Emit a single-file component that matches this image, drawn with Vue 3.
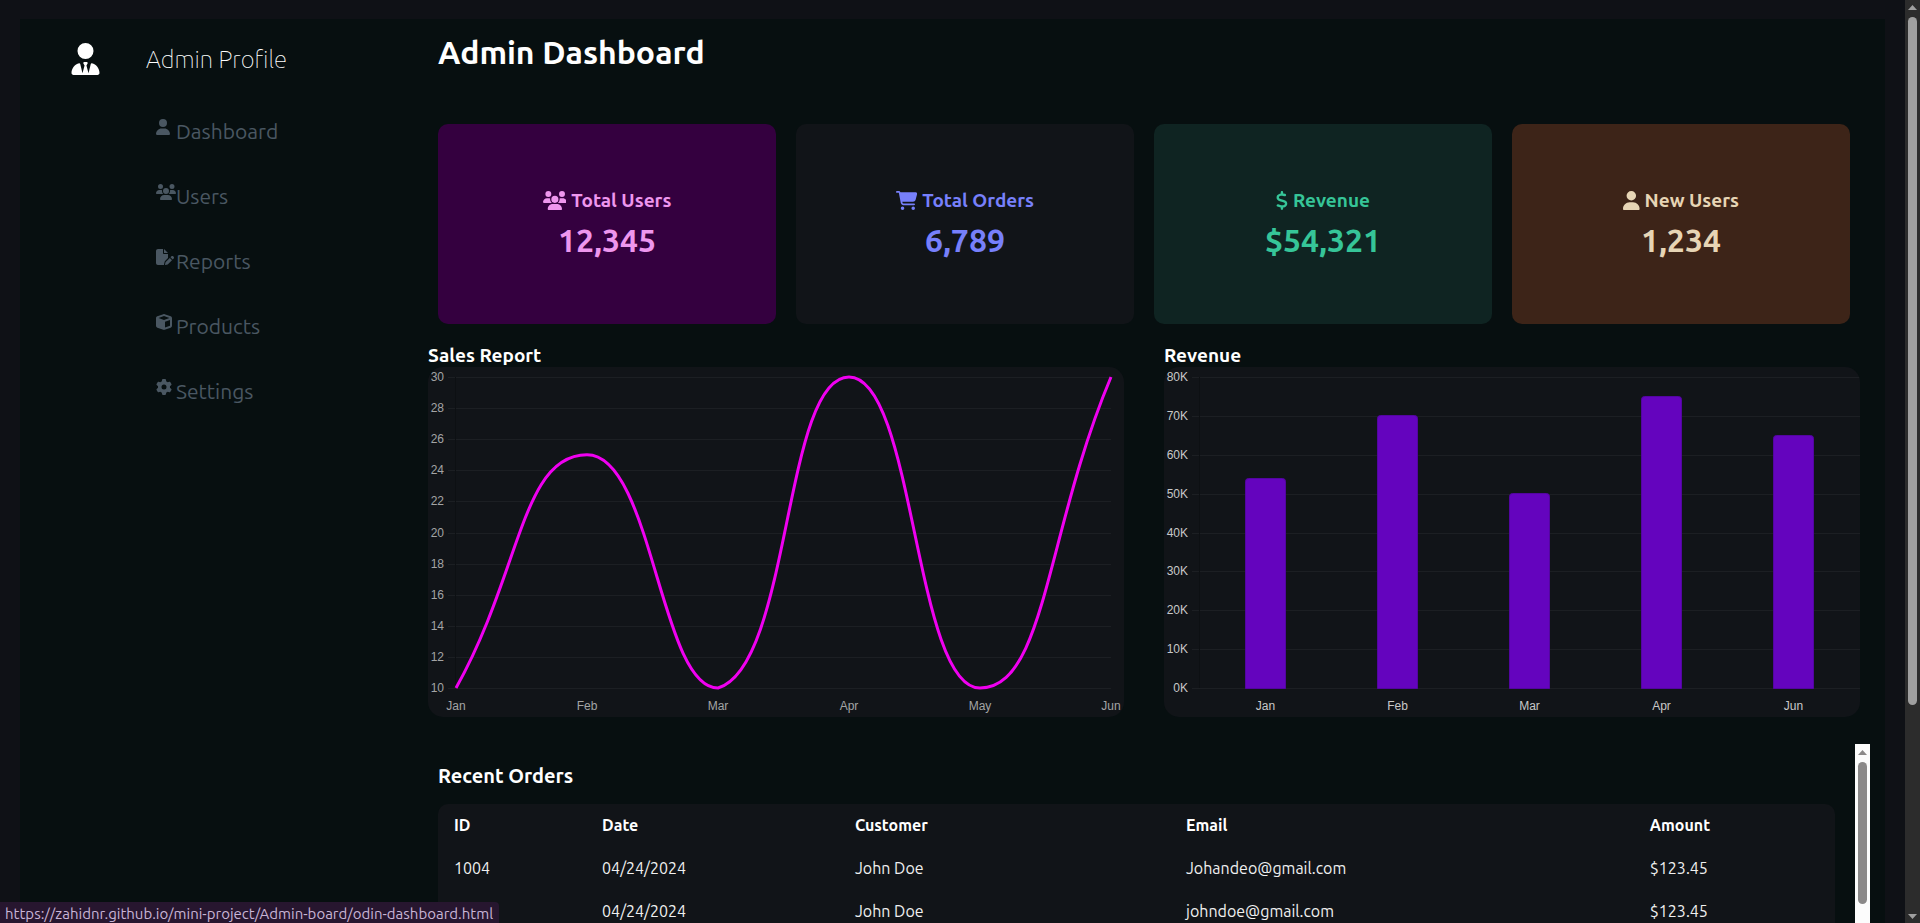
<script setup>
const icons = {
  user: { w: 448, d: 'M224 256A128 128 0 1 0 224 0a128 128 0 1 0 0 256zm-45.700 48C79.800 304 0 383.800 0 482.300C0 498.700 13.300 512 29.700 512H418.300c16.400 0 29.700-13.300 29.700-29.700C448 383.800 368.200 304 269.700 304H178.300z' },
  users: { w: 640, d: 'M144 0a80 80 0 1 1 0 160A80 80 0 1 1 144 0zM512 0a80 80 0 1 1 0 160A80 80 0 1 1 512 0zM0 298.700C0 239.800 47.800 192 106.700 192h42.700c15.900 0 31 3.500 44.600 9.700c-1.300 7.200-1.900 14.700-1.900 22.300c0 38.200 16.800 72.500 43.300 96c-.2 0-.4 0-.7 0H21.300C9.600 320 0 310.400 0 298.700zM405.300 320c-.2 0-.4 0-.7 0c26.600-23.500 43.300-57.800 43.300-96c0-7.600-.7-15-1.900-22.300c13.600-6.300 28.700-9.700 44.600-9.700h42.700C592.200 192 640 239.800 640 298.700c0 11.800-9.600 21.300-21.300 21.300H405.300zM224 224a96 96 0 1 1 192 0 96 96 0 1 1-192 0zM128 485.300C128 411.700 187.700 352 261.300 352H378.700C452.300 352 512 411.700 512 485.300c0 14.700-11.900 26.700-26.700 26.700H154.700c-14.700 0-26.700-11.900-26.700-26.700z' },
  report: { w: 576, d: 'M0 64C0 28.700 28.700 0 64 0H224V128c0 17.700 14.300 32 32 32H384V285.700l-86.800 86.800c-10.300 10.300-17.500 23.100-21 37.200l-18.700 74.900c-2.300 9.200-1.800 18.800 1.300 27.500H64c-35.300 0-64-28.700-64-64V64zm384 64H256V0L384 128zM549.800 235.700l14.400 14.400c15.600 15.600 15.600 40.900 0 56.600l-29.400 29.400-71-71 29.400-29.400c15.600-15.600 40.900-15.600 56.600 0zM311.900 417L441.100 287.800l71 71L382.900 487.900c-4.100 4.100-9.200 7-14.900 8.400l-60.100 15c-5.500 1.400-11.200-.2-15.200-4.200s-5.600-9.700-4.200-15.200l15-60.100c1.400-5.600 4.300-10.800 8.400-14.900z' },
  box: { w: 512, d: 'M234.500 5.700c13.900-5 29.100-5 43.100 0l192 68.600C495 83.400 512 107.500 512 134.600V377.400c0 27-17 51.200-42.500 60.300l-192 68.600c-13.900 5-29.100 5-43.100 0l-192-68.600C17 428.600 0 404.500 0 377.400V134.600c0-27 17-51.200 42.500-60.300l192-68.600zM256 66L82.300 128 256 190l173.700-62L256 66zm32 368.600l160-57.100v-188L288 246.600v188z' },
  gear: { w: 512, d: 'M495.900 166.600c3.200 8.700 .5 18.400-6.400 24.600l-43.300 39.400c1.100 8.300 1.700 16.800 1.700 25.400s-.6 17.100-1.700 25.400l43.300 39.400c6.900 6.200 9.600 15.900 6.400 24.600c-4.400 11.900-9.700 23.300-15.800 34.300l-4.700 8.100c-6.600 11-14 21.400-22.100 31.200c-5.900 7.200-15.700 9.600-24.500 6.800l-55.700-17.700c-13.400 10.300-28.200 18.900-44 25.400l-12.500 57.100c-2 9.100-9 16.300-18.200 17.800c-13.800 2.300-28 3.500-42.500 3.500s-28.700-1.200-42.500-3.500c-9.200-1.500-16.200-8.700-18.200-17.800l-12.500-57.100c-15.800-6.500-30.600-15.100-44-25.400L83.100 425.900c-8.800 2.800-18.600 .3-24.500-6.800c-8.100-9.800-15.500-20.200-22.100-31.200l-4.700-8.100c-6.100-11-11.400-22.400-15.800-34.300c-3.200-8.700-.5-18.400 6.400-24.600l43.300-39.400C64.600 273.100 64 264.600 64 256s.6-17.100 1.700-25.400L22.400 191.200c-6.900-6.200-9.600-15.900-6.400-24.600c4.400-11.900 9.700-23.300 15.800-34.300l4.700-8.100c6.600-11 14-21.400 22.100-31.200c5.900-7.200 15.700-9.600 24.500-6.800l55.700 17.700c13.400-10.300 28.200-18.900 44-25.400l12.500-57.100c2-9.100 9-16.300 18.200-17.800C227.300 1.200 241.500 0 256 0s28.700 1.200 42.500 3.500c9.200 1.500 16.200 8.700 18.200 17.800l12.500 57.100c15.800 6.500 30.600 15.100 44 25.400l55.700-17.700c8.800-2.800 18.600-.3 24.500 6.800c8.100 9.800 15.500 20.200 22.100 31.200l4.700 8.100c6.100 11 11.400 22.400 15.800 34.300zM256 336a80 80 0 1 0 0-160 80 80 0 1 0 0 160z' },
  cart: { w: 576, d: 'M0 24C0 10.700 10.700 0 24 0H69.500c22 0 41.500 12.800 50.600 32h411c26.300 0 45.500 25 38.600 50.400l-41 152.300c-8.500 31.400-37 53.300-69.500 53.300H170.700l5.400 28.500c2.200 11.300 12.100 19.500 23.600 19.500H488c13.300 0 24 10.700 24 24s-10.700 24-24 24H199.700c-34.600 0-64.300-24.600-70.700-58.500L77.400 54.500c-.7-3.800-4-6.500-7.900-6.500H24C10.700 48 0 37.300 0 24zM128 464a48 48 0 1 1 96 0 48 48 0 1 1-96 0zm336-48a48 48 0 1 1 0 96 48 48 0 1 1 0-96z' },
  dollar: { w: 320, d: 'M160 0c17.700 0 32 14.300 32 32V67.700c1.600 .2 3.100 .4 4.700 .7c.4 .1 .7 .1 1.100 .2l48 8.800c17.400 3.200 28.900 19.900 25.700 37.200s-19.900 28.900-37.200 25.700l-47.500-8.700c-31.300-4.600-58.900-1.500-78.300 6.200s-27.200 18.300-29 28.100c-2 10.700-.5 16.700 1.200 20.400c1.800 3.900 5.500 8.300 12.800 13.200c16.300 10.700 41.300 17.700 73.700 26.300l2.900 .8c28.600 7.600 63.600 16.800 89.600 33.800c14.200 9.300 27.600 21.900 35.900 39.500c8.500 17.900 10.300 37.900 6.400 59.200c-6.900 38-33.100 63.400-65.600 76.700c-13.700 5.600-28.600 9.200-44.400 11V480c0 17.700-14.300 32-32 32s-32-14.300-32-32V445.100c-.4-.1-.9-.1-1.300-.2l-.2 0c-24.400-3.800-64.500-14.300-91.500-26.300c-16.100-7.200-23.400-26.100-16.200-42.200s26.100-23.400 42.200-16.200c20.900 9.300 55.300 18.500 75.200 21.600c31.900 4.700 58.200 2 76-5.300c16.900-6.900 24.600-16.900 26.800-28.900c1.900-10.600 .4-16.700-1.300-20.400c-1.900-4-5.600-8.400-13-13.300c-16.400-10.700-41.500-17.700-74-26.300l-2.800-.7c-28.500-7.600-63.500-16.900-89.500-33.900c-14.200-9.300-27.500-22-35.800-39.600c-8.400-17.900-10.100-37.900-6.100-59.200C23.700 116 52.300 91.200 84.800 78.300c13.300-5.300 27.900-8.900 43.200-11V32c0-17.700 14.300-32 32-32z' },
  admin: { w: 448, d: 'M96 128a128 128 0 1 0 256 0A128 128 0 1 0 96 128zm94.500 200.200l18.600 31L175.800 483.100l-36-146.900c-2-8.100-9.800-13.400-17.900-11.300C51.900 342.400 0 405.800 0 481.300c0 17 13.800 30.700 30.700 30.700H417.300c17 0 30.700-13.800 30.700-30.700c0-75.500-51.900-138.900-121.900-156.400c-8.100-2-15.900 3.300-17.900 11.300l-36 146.900L238.900 359.200l18.600-31c6.400-10.700-1.300-24.200-13.700-24.200H204.300c-12.400 0-20.100 13.600-13.700 24.200z' },
}

const nav = [
  { label: 'Dashboard', icon: icons.user },
  { label: 'Users', icon: icons.users },
  { label: 'Reports', icon: icons.report },
  { label: 'Products', icon: icons.box },
  { label: 'Settings', icon: icons.gear },
]

const cards = [
  { label: 'Total Users', value: '12,345', icon: icons.users, tone: 'violet' },
  { label: 'Total Orders', value: '6,789', icon: icons.cart, tone: 'indigo' },
  { label: 'Revenue', value: '$54,321', icon: icons.dollar, tone: 'green' },
  { label: 'New Users', value: '1,234', icon: icons.user, tone: 'sand' },
]

const orders = [
  { id: '1004', date: '04/24/2024', customer: 'John Doe', email: 'Johandeo@gmail.com', amount: '$123.45' },
  { id: '', date: '04/24/2024', customer: 'John Doe', email: 'johndoe@gmail.com', amount: '$123.45' },
]

const TOP = 10
const BOTTOM = 321

// Line chart
const line = { left: 28, right: 683 }
const tension = 0.5
const months = ['Jan', 'Feb', 'Mar', 'Apr', 'May', 'Jun']
const sales = [10, 25, 10, 30, 10, 30]
const salesY = (v) => BOTTOM - ((v - 10) / 20) * (BOTTOM - TOP)
const points = sales.map((v, i) => ({
  x: line.left + ((line.right - line.left) * i) / (sales.length - 1),
  y: salesY(v),
}))
const salesTicks = Array.from({ length: 11 }, (_, i) => 30 - i * 2)

const clampY = (y) => Math.min(BOTTOM, Math.max(TOP, y))
const controls = points.map((p, i) => {
  const prev = points[Math.max(i - 1, 0)]
  const next = points[Math.min(i + 1, points.length - 1)]
  const before = Math.hypot(p.x - prev.x, p.y - prev.y)
  const after = Math.hypot(next.x - p.x, next.y - p.y)
  const a = (tension * before) / (before + after)
  const b = (tension * after) / (before + after)
  return {
    inX: p.x - a * (next.x - prev.x),
    inY: clampY(p.y - a * (next.y - prev.y)),
    outX: p.x + b * (next.x - prev.x),
    outY: clampY(p.y + b * (next.y - prev.y)),
  }
})
const curve = points
  .map((p, i) => {
    if (i === 0) return `M${p.x} ${p.y}`
    const from = controls[i - 1]
    const to = controls[i]
    return `C${from.outX} ${from.outY} ${to.inX} ${to.inY} ${p.x} ${p.y}`
  })
  .join('')

// Bar chart
const revenue = [
  { month: 'Jan', value: 54 },
  { month: 'Feb', value: 70 },
  { month: 'Mar', value: 50 },
  { month: 'Apr', value: 75 },
  { month: 'Jun', value: 65 },
]
const revenueY = (v) => BOTTOM - (v / 80) * (BOTTOM - TOP)
const barX = (i) => 35.5 + 132 * i + 66
const barPath = (i, v) => {
  const l = barX(i) - 20
  const r = barX(i) + 20
  const t = Math.floor(revenueY(v)) + 0.5
  return `M${l} ${BOTTOM + 0.5}V${t + 3}q0-3 3-3H${r - 3}q3 0 3 3V${BOTTOM + 0.5}z`
}
const revenueTicks = [80, 70, 60, 50, 40, 30, 20, 10, 0]
const gridY = (y) => Math.round(y) + 0.5
</script>

<template>
  <div class="window">
    <div class="page">
      <div class="shell">
        <aside class="sidebar">
          <div class="profile">
            <svg class="avatar" viewBox="0 0 448 512" aria-hidden="true"><path :d="icons.admin.d" /></svg>
            <p class="profile-name">Admin Profile</p>
          </div>
          <nav class="nav">
            <a v-for="item in nav" :key="item.label" href="#" class="nav-link">
              <svg class="nav-icon" :viewBox="`0 0 ${item.icon.w} 512`" preserveAspectRatio="xMinYMin meet" aria-hidden="true"><path :d="item.icon.d" /></svg>
              <span>{{ item.label }}</span>
            </a>
          </nav>
        </aside>

        <main class="main">
          <h1 class="title">Admin Dashboard</h1>

          <section class="cards">
            <article v-for="card in cards" :key="card.label" class="card" :class="card.tone">
              <h3 class="card-label">
                <svg class="card-icon" :viewBox="`0 0 ${card.icon.w} 512`" aria-hidden="true"><path :d="card.icon.d" /></svg>
                <span>{{ card.label }}</span>
              </h3>
              <p class="card-value">{{ card.value }}</p>
            </article>
          </section>

          <section class="charts">
            <div class="chart">
              <h3 class="chart-title">Sales Report</h3>
              <svg class="plot" viewBox="0 0 696 350" role="img" aria-label="Sales Report">
                <g class="grid">
                  <line v-for="t in salesTicks" :key="t" x1="20" :x2="line.right" :y1="gridY(salesY(t))" :y2="gridY(salesY(t))" />
                </g>
                <line class="axis" x1="27.5" x2="27.5" :y1="TOP" :y2="BOTTOM" />
                <g class="ticks dim">
                  <text v-for="t in salesTicks" :key="t" x="16" :y="salesY(t) + 4" text-anchor="end">{{ t }}</text>
                  <text v-for="(m, i) in months" :key="m" :x="points[i].x" y="343" text-anchor="middle">{{ m }}</text>
                </g>
                <path class="curve" :d="curve" />
              </svg>
            </div>
            <div class="chart">
              <h3 class="chart-title">Revenue</h3>
              <svg class="plot" viewBox="0 0 696 350" role="img" aria-label="Revenue">
                <g class="grid">
                  <line v-for="t in revenueTicks" :key="t" x1="28" x2="696" :y1="gridY(revenueY(t))" :y2="gridY(revenueY(t))" />
                </g>
                <line class="axis" x1="35.5" x2="35.5" :y1="TOP" :y2="BOTTOM" />
                <path v-for="(bar, i) in revenue" :key="bar.month" class="bar" :d="barPath(i, bar.value)" />
                <g class="ticks">
                  <text v-for="t in revenueTicks" :key="t" x="24" :y="revenueY(t) + 4" text-anchor="end">{{ t }}K</text>
                  <text v-for="(bar, i) in revenue" :key="bar.month" :x="barX(i)" y="343" text-anchor="middle">{{ bar.month }}</text>
                </g>
              </svg>
            </div>
          </section>

          <section class="orders">
            <div class="orders-body">
              <h2 class="orders-title">Recent Orders</h2>
              <table class="table">
                <colgroup>
                  <col class="col-id" /><col class="col-date" /><col class="col-customer" /><col class="col-email" /><col />
                </colgroup>
                <thead>
                  <tr><th>ID</th><th>Date</th><th>Customer</th><th>Email</th><th>Amount</th></tr>
                </thead>
                <tbody>
                  <tr v-for="order in orders" :key="order.email">
                    <td>{{ order.id }}</td>
                    <td>{{ order.date }}</td>
                    <td>{{ order.customer }}</td>
                    <td>{{ order.email }}</td>
                    <td>{{ order.amount }}</td>
                  </tr>
                </tbody>
              </table>
            </div>
            <div class="bar-track light">
              <svg class="arrow" viewBox="0 0 15 17"><path d="M3 10h9L7.500 5z" /></svg>
              <div class="thumb inner-thumb"></div>
            </div>
          </section>
        </main>
      </div>
      <div class="status">https://zahidnr.github.io/mini-project/Admin-board/odin-dashboard.html</div>
    </div>
    <div class="bar-track dark">
      <svg class="arrow" viewBox="0 0 15 17"><path d="M3 10h9L7.500 5z" /></svg>
      <div class="thumb page-thumb"></div>
      <div class="spacer"></div>
      <svg class="arrow" viewBox="0 0 15 17"><path d="M3 8h9L7.500 13z" /></svg>
    </div>
  </div>
</template>

<style>
body {
  margin: 0;
  background: #0f1116;
}
</style>

<style scoped>
.window {
  display: flex;
  height: 100vh;
  overflow: hidden;
  color: #fff;
  background: #0f1116;
  font-family: "Ubuntu", "Open Sans", "Noto Sans", sans-serif;
  font-size: 16px;
}
h1, h2, h3, p {
  margin: 0;
}
svg {
  display: block;
  fill: currentColor;
}
.page {
  position: relative;
  flex: 1;
  min-width: 0;
  height: 100vh;
  overflow: hidden;
}
.shell {
  display: grid;
  grid-template-columns: minmax(0, 1fr) minmax(0, 4fr);
  gap: 20px;
  min-height: 100vh;
  margin: 19px 20px 0;
  padding: 0 15px;
  background: #070f10;
}
.profile {
  display: flex;
  align-items: center;
  gap: 46px;
  height: 80px;
  padding-left: 36px;
}
.avatar {
  width: 29px;
  height: 32px;
}
.profile-name {
  padding-top: 2px;
  font-size: 24px;
  font-weight: 100;
  line-height: 32px;
}
.nav {
  display: flex;
  flex-direction: column;
  gap: 35px;
  padding: 18px 0 0 121px;
}
.nav-link {
  display: grid;
  grid-template-columns: 20px 1fr;
  align-items: start;
  height: 30px;
  color: #4a5762;
  font-size: 21px;
  font-weight: 400;
  line-height: 28px;
  text-decoration: none;
}
.nav-icon {
  width: 20px;
  height: 16px;
  margin-top: 2px;
}
.main {
  min-width: 0;
}
.title {
  padding: 12px 20px 0;
  font-size: 32px;
  font-weight: 700;
  line-height: 42px;
}
.cards {
  display: grid;
  grid-template-columns: repeat(4, minmax(0, 1fr));
  gap: 20px;
  padding: 51px 20px 20px;
}
.card {
  display: flex;
  flex-direction: column;
  align-items: center;
  justify-content: center;
  gap: 12px;
  height: 200px;
  border-radius: 10px;
}
.card-label {
  display: flex;
  align-items: center;
  gap: 5px;
  font-size: 19px;
  font-weight: 600;
  line-height: 20px;
}
.card-icon {
  height: 19px;
}
.card-value {
  font-size: 32px;
  font-weight: 700;
  line-height: 36px;
}
.violet {
  color: #ee96ee;
  background: #34003f;
}
.indigo {
  color: #7780fb;
  background: #111418;
}
.green {
  color: #36c598;
  background: #0f2422;
}
.sand {
  color: #e7d5b5;
  background: #3d2418;
}
.charts {
  display: grid;
  grid-template-columns: repeat(2, minmax(0, 1fr));
  gap: 40px;
  padding: 0 10px;
}
.chart-title {
  font-size: 19px;
  font-weight: 600;
  line-height: 23px;
}
.plot {
  width: 100%;
  border-radius: 15px;
  background: #111418;
}
.grid line {
  stroke: #1c1f23;
}
.axis {
  stroke: #0d1013;
}
.ticks {
  fill: #c8c8c8;
  font-family: "Liberation Sans", Arial, sans-serif;
  font-size: 12px;
}
.dim {
  fill: #a3a4a5;
}
.curve {
  fill: none;
  stroke: #f000f0;
  stroke-width: 3;
}
.bar {
  fill: #6404be;
  stroke: #5305a0;
}
.orders {
  display: flex;
  height: 400px;
  margin-top: 27px;
}
.orders-body {
  flex: 1;
  min-width: 0;
  padding: 16px 20px;
}
.orders-title {
  font-size: 20px;
  font-weight: 600;
  line-height: 32px;
}
.table {
  width: 100%;
  margin-top: 12px;
  border-collapse: collapse;
  table-layout: fixed;
  border-radius: 10px;
  background: #111418;
}
.col-id {
  width: 10.6%;
}
.col-date {
  width: 18.1%;
}
.col-customer {
  width: 23.7%;
}
.col-email {
  width: 33.2%;
}
th, td {
  box-sizing: border-box;
  height: 43px;
  padding: 0 16px 2px;
  text-align: left;
  line-height: 24px;
}
th {
  font-weight: 700;
}
td {
  color: #f0f0f0;
}
.bar-track {
  display: flex;
  flex-direction: column;
  align-items: center;
  width: 15px;
}
.light {
  padding-top: 1px;
  color: #8b8989;
  background: #fcfcfc;
}
.dark {
  color: #9f9f9f;
  background: #2c2c2c;
}
.arrow {
  width: 15px;
  height: 17px;
  flex: none;
}
.thumb {
  width: 9px;
  border-radius: 5px;
  background: currentColor;
}
.inner-thumb {
  height: 142px;
}
.page-thumb {
  height: 688px;
}
.spacer {
  flex: 1;
}
.status {
  position: absolute;
  bottom: 0;
  left: 0;
  padding: 2px 6px 0 5px;
  border-radius: 0 4px 0 0;
  color: #c8b5d6;
  background: #27162f;
  font-size: 15px;
  line-height: 19px;
}
</style>
